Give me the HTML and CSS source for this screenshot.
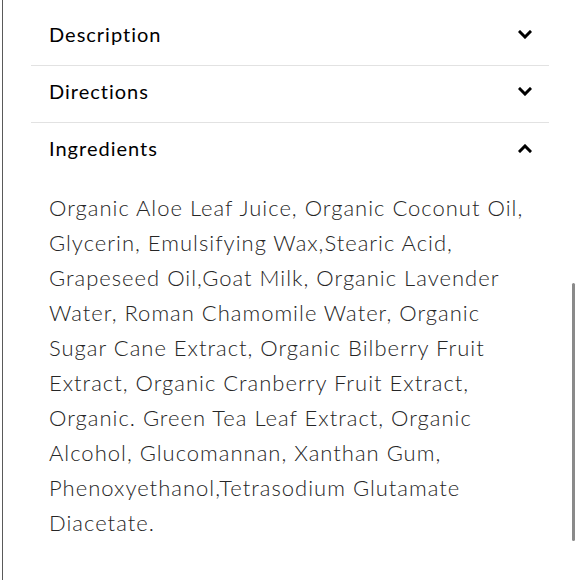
FILE: index.html
```html
<!DOCTYPE html>
<html>
<head>
<meta charset="utf-8">
<link rel="stylesheet" href="styles.css">
</head>
<body>
<div class="page">
  <div class="accordion">
    <div class="item">
      <div class="header">
        <span class="title">Description</span>
        <svg class="chev" viewBox="0 0 14 9" width="14" height="9"><polyline points="2,2 7,7 12,2"/></svg>
      </div>
    </div>
    <div class="item">
      <div class="header">
        <span class="title">Directions</span>
        <svg class="chev" viewBox="0 0 14 9" width="14" height="9"><polyline points="2,2 7,7 12,2"/></svg>
      </div>
    </div>
    <div class="item open">
      <div class="header">
        <span class="title">Ingredients</span>
        <svg class="chev" viewBox="0 0 14 9" width="14" height="9"><polyline points="2,7 7,2 12,7"/></svg>
      </div>
      <p class="content">Organic Aloe Leaf Juice, Organic Coconut Oil, Glycerin, Emulsifying Wax,Stearic Acid, Grapeseed Oil,Goat Milk, Organic Lavender Water, Roman Chamomile Water, Organic Sugar Cane Extract, Organic Bilberry Fruit Extract, Organic Cranberry Fruit Extract, Organic. Green Tea Leaf Extract, Organic Alcohol, Glucomannan, Xanthan Gum, Phenoxyethanol,Tetrasodium Glutamate Diacetate.</p>
    </div>
  </div>
  <div class="scrollbar"></div>
</div>
</body>
</html>
```
FILE: styles.css
```css
html, body {
  margin: 0;
  padding: 0;
  background: #fff;
}
.page {
  margin-left: 2px;
  border-left: 1px solid #5a5a5a;
  height: 580px;
  box-sizing: border-box;
  padding-top: 9px;
  font-family: Lato, "Open Sans", sans-serif;
}
.accordion {
  margin-left: 28px;
  width: 518px;
}
.item {
  border-bottom: 1px solid #e2e2e2;
}
.item.open {
  border-bottom: none;
}
.header {
  height: 56px;
  display: flex;
  align-items: center;
  justify-content: space-between;
  padding: 0 17px 0 18px;
  box-sizing: border-box;
}
.title {
  font-size: 20px;
  color: #000;
  letter-spacing: 1px;
  padding-bottom: 7px;
}
.chev {
  display: block;
  margin-bottom: 5px;
}
.chev polyline {
  fill: none;
  stroke: #000;
  stroke-width: 3;
  stroke-linecap: square;
}
.content {
  margin: 0;
  padding: 11px 18px 0 18px;
  font-size: 22px;
  line-height: 35px;
  letter-spacing: 1px;
  color: #262626;
  font-weight: 300;
}
.scrollbar {
  position: absolute;
  left: 572px;
  top: 283px;
  width: 3px;
  height: 258px;
  border-radius: 2px;
  background: #8a8a8a;
}
```
